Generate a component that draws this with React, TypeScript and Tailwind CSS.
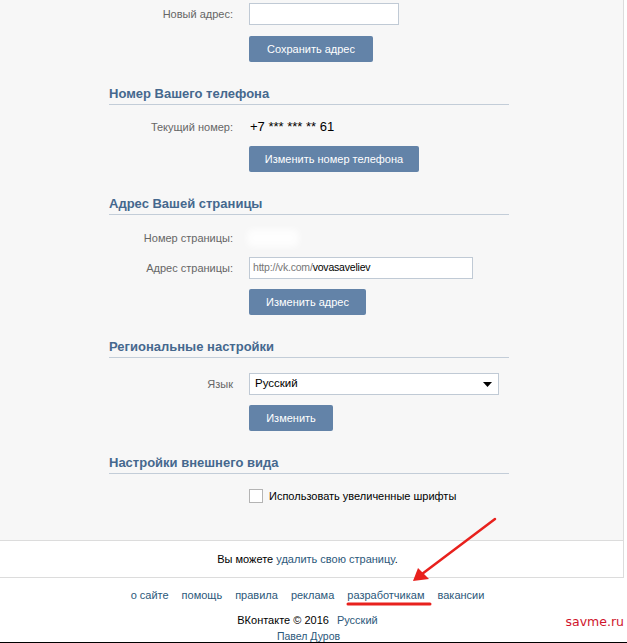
import React from 'react'

const labelCls = 'w-[140px] shrink-0 whitespace-nowrap pr-4 text-right text-[#666]'
const btnCls =
  'block h-[26px] whitespace-nowrap rounded-[2px] bg-[#6383a8] text-center text-[11px] leading-[26px] text-white'

function Heading({ children, className }: { children: React.ReactNode; className: string }) {
  return (
    <div
      className={
        'w-[400px] border-b border-[#c3cdd8] pb-[2px] text-[13px] font-bold leading-[16px] text-[#45688e] ' +
        className
      }
    >
      {children}
    </div>
  )
}

function Row({ label, children, className }: { label: string; children: React.ReactNode; className: string }) {
  return (
    <div className={'flex items-center ' + className}>
      <div className={labelCls}>{label}</div>
      {children}
    </div>
  )
}

export default function App() {
  return (
    <div className="relative flex h-[643px] w-[627px] flex-col overflow-hidden bg-white font-['Liberation_Sans',Arial,sans-serif] text-[11px] text-black">
      <div className="w-[624px] shrink-0 border-r border-[#dcdcdc]">
        {/* settings panel */}
        <div className="border-b border-[#dcdcdc] bg-[#f7f7f7] pb-[37px] pl-[109px]">
          <Row label="Новый адрес:" className="pt-[3px]">
            <div className="h-[22px] w-[150px] border border-[#c0cad5] bg-white" />
          </Row>
          <div className="mt-[11px] pl-[140px]">
            <div className={btnCls + ' w-[124px]'}>Сохранить адрес</div>
          </div>

          <Heading className="mt-[24px]">Номер Вашего телефона</Heading>
          <Row label="Текущий номер:" className="mt-[11px] h-[22px]">
            <span className="pl-[1px] text-[13px]">+7 *** *** ** 61</span>
          </Row>
          <div className="mt-[8px] pl-[140px]">
            <div className={btnCls + ' w-[170px]'}>Изменить номер телефона</div>
          </div>

          <Heading className="mt-[24px]">Адрес Вашей страницы</Heading>
          <Row label="Номер страницы:" className="mt-[12px] h-[22px]">
            <div className="-ml-[2px] h-[18px] w-[52px] rounded-md bg-white/80 blur-[3px]" />
          </Row>
          <Row label="Адрес страницы:" className="mt-[8px]">
            <div className="flex h-[22px] w-[224px] items-center border border-[#c0cad5] bg-white pl-[3px] text-[10.5px] tracking-[-0.2px]">
              <span className="text-[#777]">http://vk.com/</span>
              <span>vovasaveliev</span>
            </div>
          </Row>
          <div className="mt-[10px] pl-[140px]">
            <div className={btnCls + ' w-[117px]'}>Изменить адрес</div>
          </div>

          <Heading className="mt-[24px]">Региональные настройки</Heading>
          <Row label="Язык" className="mt-[15px]">
            <div className="flex h-[22px] w-[250px] items-center justify-between border border-[#c0cad5] bg-white pl-[5px] pr-[6px] text-[11.5px]">
              <span>Русский</span>
              <svg width="9" height="5" viewBox="0 0 9 5">
                <path d="M0 0h9L4.5 5z" fill="#000" />
              </svg>
            </div>
          </Row>
          <div className="mt-[10px] pl-[140px]">
            <div className={btnCls + ' w-[84px]'}>Изменить</div>
          </div>

          <Heading className="mt-[24px]">Настройки внешнего вида</Heading>
          <div className="mt-[15px] flex h-[14px] items-center pl-[140px]">
            <div className="h-[14px] w-[14px] border border-[#b4b4b4] bg-white" />
            <span className="ml-[6px] text-[11px] leading-[14px]">Использовать увеличенные шрифты</span>
          </div>
        </div>

        {/* delete strip */}
        <div className="flex h-[37px] items-center justify-center border-b border-[#dcdcdc] bg-white pr-[8px] text-[11px]">
          <span>
            Вы можете <span className="text-[#2b587a]">удалить свою страницу</span>.
          </span>
        </div>
      </div>

      {/* footer */}
      <div className="flex flex-1 flex-col items-center pr-[12px] text-[11px] text-[#2b587a]">
        <div className="mt-[10px] flex gap-[13px] leading-[14px]">
          <span>о сайте</span>
          <span>помощь</span>
          <span>правила</span>
          <span>реклама</span>
          <span>разработчикам</span>
          <span>вакансии</span>
        </div>
        <div className="mt-[11px] leading-[14px]">
          <span className="text-black">ВКонтакте © 2016</span>
          <span className="ml-[8px]">Русский</span>
        </div>
        <div className="mt-[3px] pl-[2px] text-[10.5px] leading-[12px]">Павел Дуров</div>
      </div>
      <div className="h-[2px] w-full shrink-0 bg-black" />

      {/* annotation overlay */}
      <svg className="pointer-events-none absolute left-0 top-0" width="627" height="643">
        <line x1="495" y1="519" x2="422" y2="574" stroke="#e8211d" strokeWidth="2.5" strokeLinecap="round" />
        <path d="M413 581 L418 568 L429 579 Z" fill="#e8211d" />
        <line x1="348" y1="604" x2="430" y2="604" stroke="#e8211d" strokeWidth="3" strokeLinecap="round" />
      </svg>
      <div className="absolute right-[3px] top-[613px] font-['DejaVu_Sans',sans-serif] text-[12.5px] text-[#d0142c]">
        savme.ru
      </div>
    </div>
  )
}
